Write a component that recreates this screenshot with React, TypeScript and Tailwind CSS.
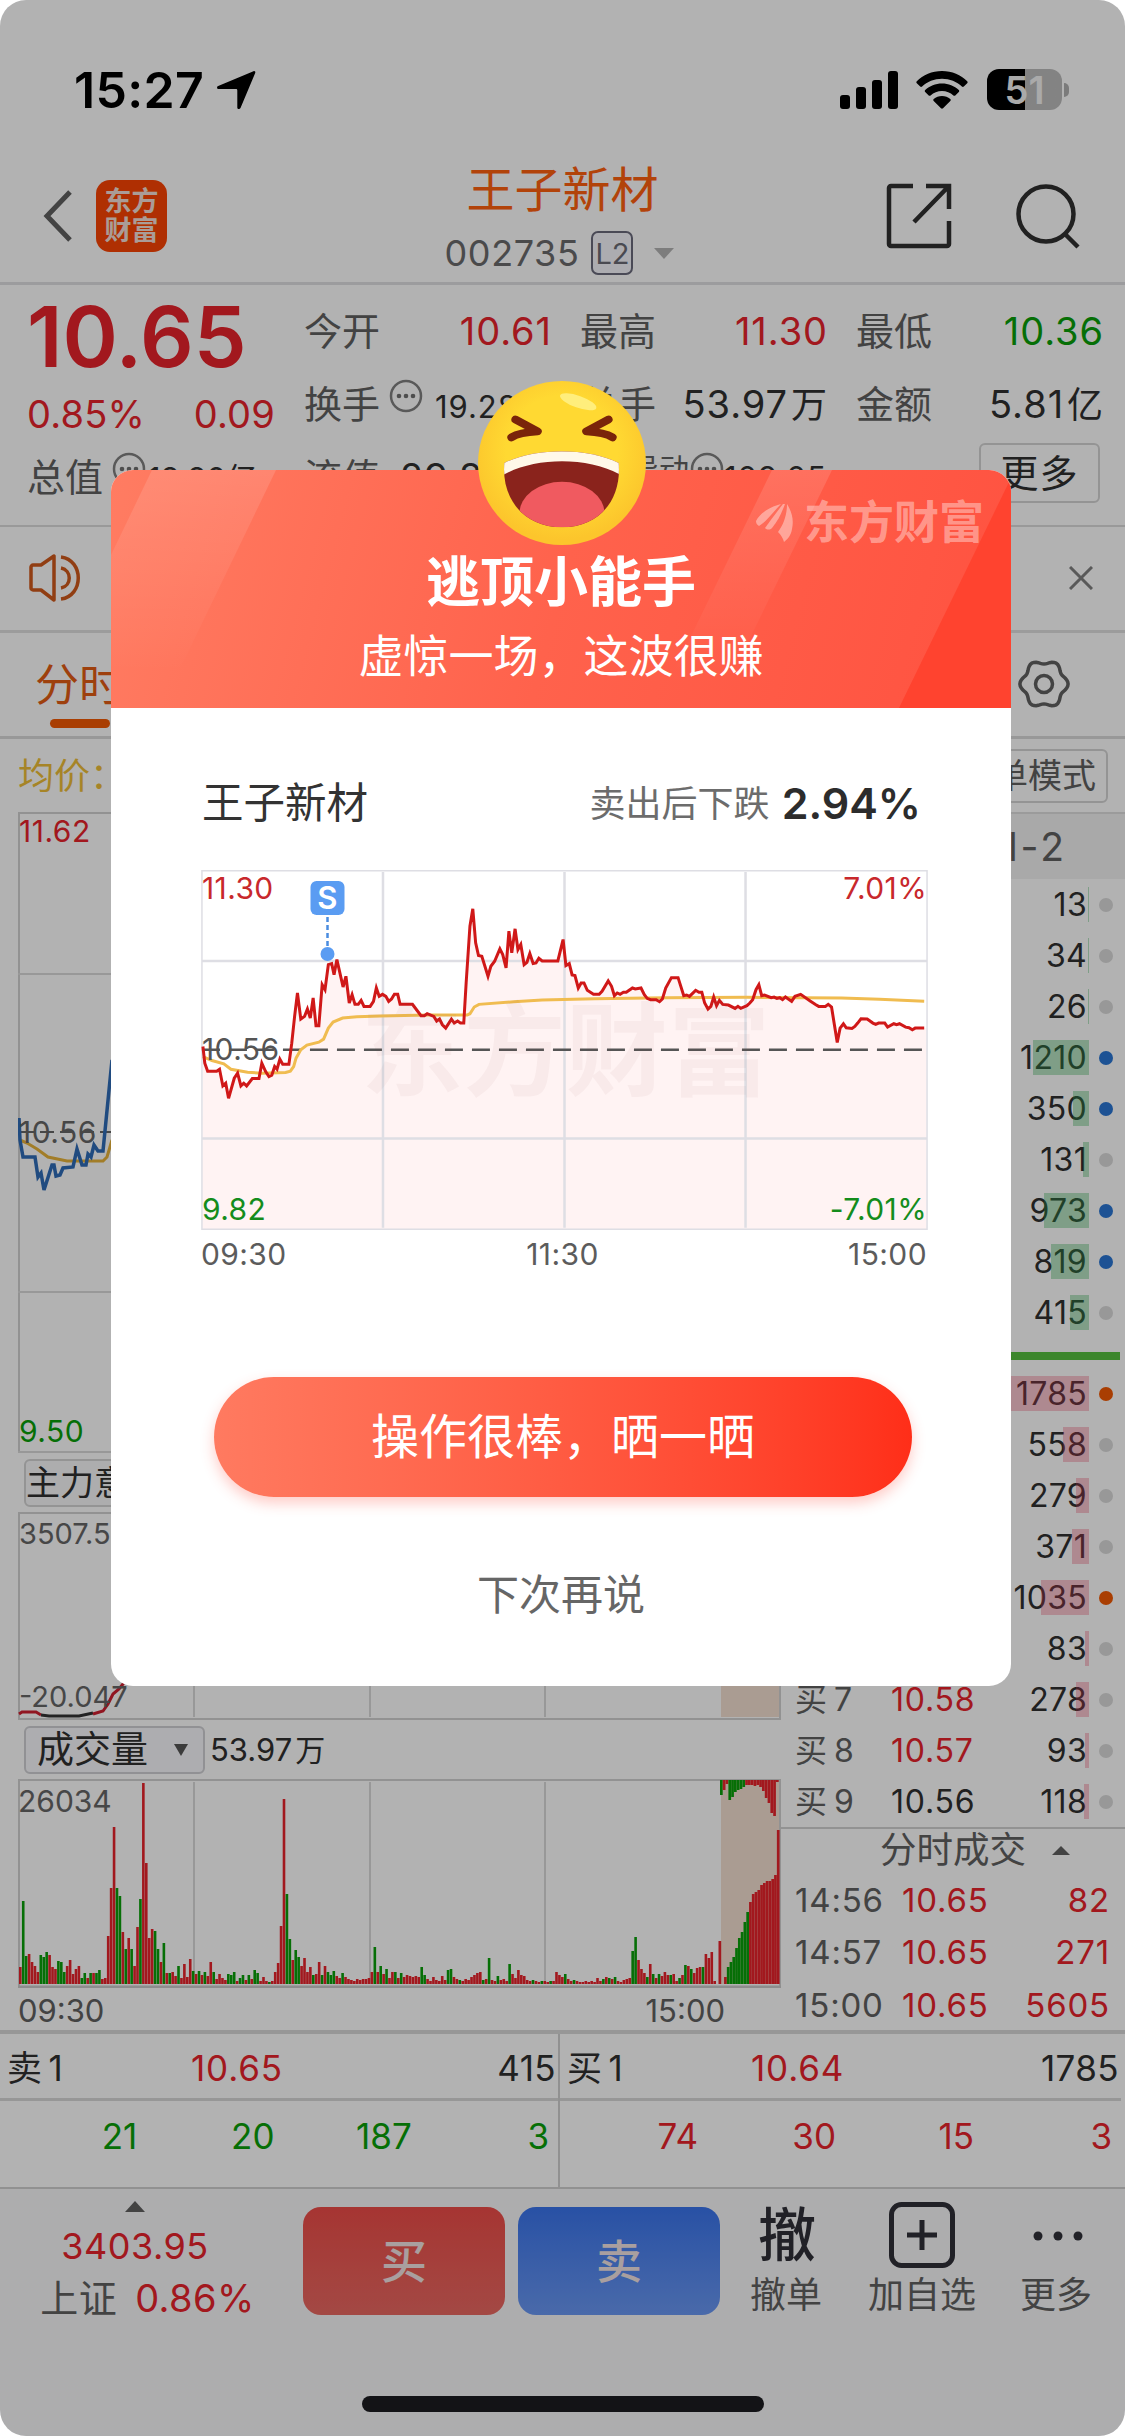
import type { ReactNode } from "react";

const RED = "text-[#e8232b]";
const GREEN = "text-[#0a9f0a]";

// one bar per minute, height in px, negative = falling minute (green)
const volumes = [
  17, -83, -28, 30, 22, 18, 12, -29, -27, -32, 29, 17, 15, -23, -22, -12, 18, 24, 10, 15, 18, -6, -11, 6, -11, 11, -11,
  -14, 5, 6, 48, 96, 157, -96, -88, 52, -35, 46, -35, 18, 57, -85, 201, 121, 46, 55, -53, -35, 22, -41, 11, -11, 12, 8,
  -18, 6, 20, 7, 25, -13, 10, -13, 9, -12, 8, 22, -12, 5, 10, 6, 4, -10, -9, -12, 3, -6, -9, 4, -9, 5, -14, -11, 3, 7, 3,
  -2, 3, 12, 21, 58, 185, -90, -45, 24, -34, -27, 18, 26, 12, 17, -9, 10, 22, -9, 18, -12, -9, -13, 8, 6, -11, 7, 5, 4, 3,
  5, 4, 5, 5, 6, 12, -37, 12, -18, 10, -15, 6, 12, -12, 6, -11, 7, 9, 8, 7, 8, 7, -17, -9, 5, 3, 7, 4, 3, 8, 4, -14, -15,
  7, 5, -4, 3, 5, 4, 7, 9, 11, 12, -4, 5, -26, 4, 3, -8, 4, 5, 3, -20, 10, 6, 14, 9, 8, 4, 3, -4, 3, 2, -3, 3, 2, -3, 3,
  12, 9, 7, -10, 5, 3, -4, 3, 2, 2, 3, 2, 3, 2, 6, 3, -5, 7, -6, 5, -7, 3, 2, 4, 5, 6, -33, -47, 24, 15, 11, -7, 20, -10,
  6, -10, 8, 12, 9, -9, 10, 3, -6, 9, -19, 18, -15, 11, 16, 17, -17, 30, 26, 32, 3,
];

const auction = [43, 0, 7, -17, -22, -27, -36, -46, -52, -62, -72, 82, 90, 92, 94, 99, 101, 103, 103, 105, 109, 154];
const auctionTop = [-15, 10, 4, -20, -17, -12, -10, -9, -7, 5, 5, 5, 6, 5, 7, 11, 18, 23, 33, 36, 2];

type Level = { name: string; price: string; qty: number; bar: number; dot?: boolean; flat?: boolean };

const sells: Level[] = [
  { name: "卖9", price: "10.73", qty: 13, bar: 1 },
  { name: "卖8", price: "10.72", qty: 34, bar: 1 },
  { name: "卖7", price: "10.71", qty: 26, bar: 1 },
  { name: "卖6", price: "10.70", qty: 1210, bar: 56, dot: true },
  { name: "卖5", price: "10.69", qty: 350, bar: 16, dot: true },
  { name: "卖4", price: "10.68", qty: 131, bar: 6 },
  { name: "卖3", price: "10.67", qty: 973, bar: 45, dot: true },
  { name: "卖2", price: "10.66", qty: 819, bar: 38, dot: true },
  { name: "卖1", price: "10.65", qty: 415, bar: 19 },
];

const buys: Level[] = [
  { name: "买1", price: "10.64", qty: 1785, bar: 82, dot: true },
  { name: "买2", price: "10.63", qty: 558, bar: 26 },
  { name: "买3", price: "10.62", qty: 279, bar: 13 },
  { name: "买4", price: "10.61", qty: 371, bar: 17 },
  { name: "买5", price: "10.60", qty: 1035, bar: 48, dot: true },
  { name: "买6", price: "10.59", qty: 83, bar: 4 },
  { name: "买7", price: "10.58", qty: 278, bar: 13 },
  { name: "买8", price: "10.57", qty: 93, bar: 4 },
  { name: "买9", price: "10.56", qty: 118, bar: 5, flat: true },
];

const trades = [
  ["14:56", "10.65", "82"],
  ["14:57", "10.65", "271"],
  ["15:00", "10.65", "5605"],
];

const priceLine =
  "26,590 30,640 36,664 55,664 61,658 68,708 74,700 80,745 92,685 99,670 106,708 112,700 118,708 130,686 144,686 150,640 158,665 165,680 171,676 177,650 182,658 188,628 194,643 207,643 213,580 219,500 225,430 232,508 240,500 246,478 252,505 258,445 264,528 270,528 277,405 283,420 290,345 297,342 302,375 308,330 321,412 327,380 334,460 340,435 346,464 353,464 359,452 365,470 378,470 385,455 391,415 397,440 404,434 411,440 417,455 423,448 429,434 436,434 441,464 467,464 485,498 492,498 498,492 512,500 518,514 524,508 530,525 537,535 549,508 555,520 562,514 568,520 575,520 580,400 588,230 594,178 600,280 606,318 613,320 626,380 632,350 640,335 651,298 657,315 664,355 670,245 676,310 683,238 689,300 695,285 702,345 708,338 714,312 721,342 727,340 733,326 740,334 773,334 784,270 790,348 797,342 803,376 809,378 816,415 822,400 828,400 835,422 848,434 860,434 866,425 879,394 886,410 892,438 898,430 904,434 911,428 917,428 930,415 936,418 948,415 955,435 961,446 968,450 980,450 987,456 993,448 1000,415 1012,384 1026,384 1038,438 1044,436 1050,440 1063,422 1070,428 1076,428 1082,460 1089,478 1095,470 1101,442 1107,468 1113,452 1120,464 1132,466 1146,476 1152,470 1158,476 1171,468 1177,460 1183,450 1190,420 1196,405 1202,438 1208,436 1222,444 1228,442 1234,446 1240,444 1246,450 1252,442 1265,455 1272,440 1284,434 1304,454 1316,465 1322,470 1336,470 1342,464 1349,472 1355,525 1361,578 1367,535 1374,522 1380,534 1392,536 1398,530 1404,520 1411,507 1424,508 1436,520 1442,524 1448,520 1461,520 1467,532 1480,522 1486,525 1492,522 1505,532 1512,534 1519,540 1525,535 1544,535";

const avgLine =
  "26,620 45,632 70,642 85,658 120,667 150,670 200,668 210,664 217,650 222,625 232,600 245,586 270,577 280,568 290,535 300,517 320,505 350,501 400,499 500,496 582,496 588,492 597,472 607,464 680,456 740,451 850,447 1000,444 1170,443 1370,445 1450,449 1544,455";

// outline of the six-lobed settings gear
const gear = Array.from({ length: 72 }, (_, i) => {
  const a = (i * Math.PI) / 36;
  const r = 22 + 2.1 * Math.cos(6 * a);
  return `${(26 + r * Math.cos(a)).toFixed(1)},${(26 + r * Math.sin(a)).toFixed(1)}`;
}).join(" ");

function StatusBar() {
  return (
    <div className="flex h-[153px] items-center pl-[74px] pr-[56px] pt-[26px]">
      <span className="text-[50px] font-semibold leading-none tracking-[0.3px] text-black">15:27</span>
      <svg className="ml-[12px]" width="40" height="40" viewBox="0 0 40 40">
        <path d="M37.5 1.2c1.2-.5 2.2.6 1.7 1.8L24.5 38c-.7 1.7-3.2 1.3-3.2-.6V20.5c0-.9-.5-1.4-1.4-1.4H2.8c-1.9 0-2.4-2.4-.6-3.2z" />
      </svg>
      <svg className="ml-auto" width="58" height="38" viewBox="0 0 58 38">
        <rect x="0" y="24" width="10" height="14" rx="3" />
        <rect x="16" y="16" width="10" height="22" rx="3" />
        <rect x="32" y="9" width="10" height="29" rx="3" />
        <rect x="48" y="0" width="10" height="38" rx="3" />
      </svg>
      <svg className="ml-[18px]" width="52" height="38" viewBox="0 0 52 38">
        <path d="M26 0C16 0 7 4 .8 10.300c-.6.6-.6 1.300 0 1.900l3.400 3.400c.5.5 1.300.5 1.900 0C11.200 10.600 18.200 7.800 26 7.800s14.800 2.800 19.900 7.800c.6.5 1.400.5 1.900 0l3.400-3.400c.6-.6.6-1.300 0-1.900C45 4 36 0 26 0z" />
        <path d="M26 12.500c-6.500 0-12.400 2.500-16.800 6.500-.6.6-.6 1.400 0 2l3.500 3.400c.5.500 1.300.5 1.900 0C17.600 21.700 21.600 20 26 20s8.400 1.700 11.400 4.400c.6.5 1.400.5 1.900 0l3.500-3.400c.6-.6.6-1.400 0-2-4.400-4-10.300-6.500-16.800-6.500z" />
        <path d="M26 25c-3.200 0-6 1.100-8.300 3-.6.5-.6 1.400 0 2l7.300 7.200c.6.600 1.400.6 2 0l7.300-7.200c.6-.6.600-1.500 0-2-2.300-1.900-5.100-3-8.300-3z" />
      </svg>
      <div className="ml-[19px] flex h-[41px] w-[75px] items-center justify-center rounded-[12px] bg-linear-to-r from-black from-51% to-[#bcbcbc] to-51%">
        <span className="text-[38px] font-semibold leading-none text-[#f4f4f4]">51</span>
      </div>
      <div className="ml-[2px] h-[14px] w-[5px] rounded-r-full bg-[#b0b0b0]" />
    </div>
  );
}

function NavBar() {
  return (
    <div className="grid h-[132px] grid-cols-[1fr_auto_1fr] border-b-3 border-[#e0e0e2]">
      <div className="flex items-center pl-[43px] pb-[4px]">
        <svg width="30" height="54" viewBox="0 0 30 54" fill="none" stroke="#606060" strokeWidth="5">
          <path d="M27 3 4 27l23 24" />
        </svg>
        <div className="ml-[23px] flex h-[72px] w-[71px] flex-col items-center justify-center rounded-[14px] bg-[#fb4404] text-[27px] font-bold leading-[29px] text-[#f4e0d8]">
          <span>东方</span>
          <span>财富</span>
        </div>
      </div>
      <div className="flex flex-col items-center pt-[11px]">
        <div className="text-[48px] leading-[52px] text-[#ff600f]">王子新材</div>
        <div className="mt-[15px] flex items-center pr-[6px]">
          <span className="text-[36px] leading-none tracking-[0.6px] text-[#6a6a6c]">002735</span>
          <span className="ml-[12px] flex h-[44px] w-[42px] items-center justify-center rounded-[7px] border-2 border-[#6a6a7c] bg-[#f7f7fc] text-[29px] leading-none text-[#6a6a74]">
            L2
          </span>
          <svg className="ml-[21px]" width="20" height="11" viewBox="0 0 20 11" fill="#b4b4b4">
            <path d="M0 0h20L10 11z" />
          </svg>
        </div>
      </div>
      <div className="flex items-center justify-end gap-[63px] pb-[4px] pr-[44px]">
        <svg width="66" height="66" viewBox="0 0 66 66" fill="none" stroke="#303030" strokeWidth="4.500">
          <path d="M27 3H5a2 2 0 0 0-2 2v56a2 2 0 0 0 2 2h56a2 2 0 0 0 2-2V38" />
          <path d="M40 3h23v23M62 4 28 39" />
        </svg>
        <svg width="66" height="66" viewBox="0 0 66 66" fill="none" stroke="#303030" strokeWidth="4.500">
          <circle cx="31" cy="31" r="27.500" />
          <path d="m50 51 13 13" />
        </svg>
      </div>
    </div>
  );
}

function Dots() {
  return (
    <svg className="mb-[16px] ml-[9px]" width="34" height="34" viewBox="0 0 34 34" fill="none" stroke="#808080" strokeWidth="2.500">
      <circle cx="17" cy="17" r="15" />
      <g fill="#707070" stroke="none">
        <circle cx="10" cy="17" r="2.300" />
        <circle cx="17" cy="17" r="2.300" />
        <circle cx="24" cy="17" r="2.300" />
      </g>
    </svg>
  );
}

function Stat({ label, children }: { label: ReactNode; children: ReactNode }) {
  return (
    <div className="flex h-[73px] items-center">
      <span className="flex items-center text-[38px] tracking-normal text-[#606060]">{label}</span>
      {children}
    </div>
  );
}

function Quote() {
  return (
    <div className="flex h-[242px] gap-[29px] overflow-hidden border-b-2 border-[#dcdcdc] pl-[27px] leading-none">
      <div className={`w-[248px] ${RED}`}>
        <div className="flex h-[103px] items-center text-[84px] font-semibold">10.65</div>
        <div className="flex h-[52px] items-center justify-between text-[38px] tracking-[0.2px]">
          <span>0.85%</span>
          <span>0.09</span>
        </div>
        <Stat label={<>总值<Dots /></>}>
          <span className="ml-[2px] whitespace-nowrap pt-[3px] text-[31px] text-[#303030]">18.80亿</span>
        </Stat>
      </div>
      <div className="grid grid-cols-[248px_248px_248px] content-start gap-x-[28px] pt-[9px] text-[38px] tracking-wide text-[#303030]">
        <Stat label="今开"><span className={`ml-auto ${RED}`}>10.61</span></Stat>
        <Stat label="最高"><span className={`ml-auto ${RED}`}>11.30</span></Stat>
        <Stat label="最低"><span className={`ml-auto ${GREEN}`}>10.36</span></Stat>
        <Stat label={<>换手<Dots /></>}><span className="ml-[12px] pt-[6px] text-[31px]">19.28%</span></Stat>
        <Stat label="总手"><span className="ml-auto">53.97<span className="ml-[3px] text-[36px]">万</span></span></Stat>
        <Stat label="金额"><span className="ml-auto">5.81<span className="ml-[3px] text-[36px]">亿</span></span></Stat>
        <Stat label="流值"><span className="ml-[20px]">29.89亿</span></Stat>
        <Stat label={<span className="flex items-center pl-[49px] text-[30px]"><span className="pb-[16px]">异动</span><span className="-ml-[8px]"><Dots /></span></span>}>
          <span className="pt-[2px] text-[31px]">109.05</span>
        </Stat>
        <div className="ml-auto mr-[4px] mt-[3px] flex h-[60px] w-[121px] items-center justify-center rounded-[6px] border-2 border-[#d4d4d4]">更多</div>
      </div>
    </div>
  );
}

function NewsAndTabs() {
  return (
    <>
      <div className="flex h-[106px] items-center justify-between border-b-3 border-[#e0e0e0] pb-[2px] pl-[28px] pr-[32px]">
        <svg width="54" height="50" viewBox="0 0 54 50" fill="none" stroke="#d05a1c" strokeWidth="3.500" strokeLinejoin="round">
          <path d="M3 14c0-1 1-2 2-2h8L26 3v44L13 37H5c-1 0-2-1-2-2z" />
          <path d="M33 15c11 2 11 18 0 20M33 4c23 3 23 39 0 42" />
        </svg>
        <svg width="24" height="24" viewBox="0 0 24 24" stroke="#808080" strokeWidth="3">
          <path d="M1 1l22 22M23 1 1 23" />
        </svg>
      </div>
      <div className="flex h-[106px] justify-between border-b-3 border-[#dadada] pl-[35px] pr-[55px]">
        <div className="flex flex-col items-center pt-[28px]">
          <span className="text-[44px] leading-[48px] text-[#e25c14]">分时</span>
          <span className="ml-[1px] mt-[10px] h-[9px] w-[60px] rounded-full bg-[#f25a04]" />
        </div>
        <svg className="mt-[25px]" width="52" height="52" viewBox="0 0 52 52" fill="none" stroke="#606060" strokeWidth="3.500">
          <polygon points={gear} />
          <circle cx="26" cy="26" r="8.500" />
        </svg>
      </div>
    </>
  );
}

function IntradayChart() {
  return (
    <svg className="ml-[18px] block" width="762" height="641" viewBox="18 812 762 641" fill="none">
      <path d="M19 1452V813h760" stroke="#d2d2d2" strokeWidth="2" />
      <path d="M18 974h762M18 1292h762M18 1452h762" stroke="#dadada" strokeWidth="2" />
      <path d="M20 1132h91" stroke="#666" strokeWidth="2" strokeDasharray="14 6" />
      <polyline points="20,1140 27,1143 37,1149 48,1157 67,1161 103,1161 107,1157 112,1140" stroke="#e8b43a" strokeWidth="3" />
      <polyline
        points="19,1118 20,1140 23,1157 35,1157 38,1177 41,1173 44,1190 52,1165 54,1165 56,1176 60,1175 63,1168 73,1167 77,1149 82,1165 86,1165 88,1154 91,1157 94,1145 98,1151 103,1151 112,1060"
        stroke="#2f6cb8"
        strokeWidth="3.500"
      />
      <g className="text-[30px] tracking-[0.5px]">
        <text x="19" y="842" fill="#e8232b">11.62</text>
        <text x="19" y="1143" fill="#666">10.56</text>
        <text x="19" y="1442" fill="#0a9f0a">9.50</text>
      </g>
    </svg>
  );
}

function ForceChart() {
  return (
    <svg className="ml-[18px] block" width="763" height="208" viewBox="18 1512 763 208" fill="none">
      <rect x="721" y="1512" width="59" height="205" fill="#f4e0d2" />
      <path d="M19 1720V1513h761v207" stroke="#d2d2d2" strokeWidth="2" />
      <path d="M194 1514v203M370 1514v203M545 1514v203" stroke="#dadada" strokeWidth="2" />
      <path d="M18 1719h763" stroke="#d2d2d2" strokeWidth="2" />
      <path d="m19 1714 3-2h14l5 3" stroke="#d02030" strokeWidth="3" />
      <path d="m41 1715 8 1h30l14-3" stroke="#333" strokeWidth="3" />
      <path d="m93 1714 10-3 5-7 5-10 6-5 8-10" stroke="#d02030" strokeWidth="3" />
      <g className="text-[29px]" fill="#666">
        <text x="19" y="1544">3507.53</text>
        <text x="19" y="1707">-20.047</text>
      </g>
    </svg>
  );
}

function VolumeChart() {
  return (
    <svg className="ml-[18px] block" width="763" height="209" viewBox="18 1779 763 209">
      <rect x="721" y="1780" width="58" height="204" fill="#f4e0d2" />
      <path d="M19 1988V1780h761v208" stroke="#d2d2d2" strokeWidth="2" fill="none" />
      <path d="M194 1782v202M370 1782v202M545 1782v202" stroke="#dadada" strokeWidth="2" />
      <path d="M18 1987h763" stroke="#cacaca" strokeWidth="3" />
      <text x="18" y="1812" fill="#666" className="text-[30px]">26034</text>
      {volumes.map((v, i) => (
        <rect key={i} x={19 + i * 2.93} y={1984 - Math.abs(v)} width="2.600" height={Math.abs(v)} fill={v > 0 ? "#e8232b" : "#0a9f0a"} />
      ))}
      {auction.map((v, i) => (
        <rect key={i} x={718.5 + i * 2.78} y={1984 - Math.abs(v)} width="2.700" height={Math.abs(v)} fill={v > 0 ? "#e8232b" : "#0a9f0a"} />
      ))}
      {auctionTop.map((v, i) => (
        <rect key={i} x={720 + i * 2.8} y="1780" width="2.700" height={Math.abs(v)} fill={v > 0 ? "#e8232b" : "#0a9f0a"} />
      ))}
    </svg>
  );
}

function LevelRow({ level, side }: { level: Level; side: "sell" | "buy" }) {
  const active = side === "sell" ? "bg-[#2a76d4]" : "bg-[#f25a04]";
  return (
    <div className="flex h-[51px] items-center pl-[15px] pr-[12px] text-[32px]">
      <span className="w-[96px] text-[#606060]">{level.name[0]}<span className="ml-[7px]">{level.name[1]}</span></span>
      <span className={`tracking-wide ${level.flat ? "text-[#303030]" : RED}`}>{level.price}</span>
      <span className="relative ml-auto flex h-[35px] items-center pr-[2px] tracking-[0.3px] text-[#303030]">
        {level.qty}
        <span
          className={`absolute right-0 top-0 h-full ${side === "sell" ? "bg-[#30b050]/35" : "bg-[#f04060]/30"}`}
          style={{ width: level.bar }}
        />
      </span>
      <span className={`ml-[10px] h-[14px] w-[14px] rounded-full ${level.dot ? active : "bg-[#dadada]"}`} />
    </div>
  );
}

function OrderBook() {
  return (
    <div className="w-[345px]">
      <div className="flex h-[73px] items-center justify-end pr-[17px]">
        <span className="rounded-[6px] border-2 border-[#d4d4d4] py-[8px] pl-[12px] pr-[10px] text-[34px] leading-[34px] text-[#606060]">简单模式</span>
      </div>
      <div className="flex h-[67px] items-center justify-end border-t-2 border-[#dedede] bg-[#f2f2f3] pr-[58px] text-[39px] tracking-[3px] text-[#606060]">
        Level-2
      </div>
      {sells.map((l) => <LevelRow key={l.name} level={l} side="sell" />)}
      <div className="flex h-[30px] items-center pl-[14px] pr-[5px] pt-[5px]">
        <div className="h-[8px] w-full bg-[#56c040]" />
      </div>
      {buys.map((l) => <LevelRow key={l.name} level={l} side="buy" />)}
      <div className="flex h-[47px] items-center border-t-2 border-[#d2d2d2] pb-[3px] pl-[100px] text-[36.5px] text-[#606060]">
        分时成交
        <svg className="ml-[26px]" width="18" height="9" viewBox="0 0 18 9" fill="#606060">
          <path d="M0 9h18L9 0z" />
        </svg>
      </div>
      {trades.map(([time, price, qty]) => (
        <div key={time} className={`flex h-[52.5px] items-center pl-[15px] pr-[15px] text-[33px] tracking-wide ${RED}`}>
          <span className="w-[107px] text-[#606060]">{time}</span>
          <span>{price}</span>
          <span className="ml-auto">{qty}</span>
        </div>
      ))}
    </div>
  );
}

function MarketPanel() {
  return (
    <div className="flex h-[1295px] overflow-hidden border-b-4 border-[#d8d8d8] leading-none">
      <div className="w-[780px]">
        <div className="flex h-[73px] items-center pl-[18px] text-[36px] text-[#eebe38]">均价：</div>
        <IntradayChart />
        <div className="flex h-[59px] items-center pl-[24px]">
          <span className="flex h-[48px] w-[180px] items-center rounded-[6px] border-2 border-[#d4d4d4] bg-[#f8f8fa] text-[34px] text-[#303030]">主力意愿</span>
        </div>
        <ForceChart />
        <div className="flex h-[59px] items-center pl-[24px] text-[#303030]">
          <span className="flex h-[48px] w-[181px] items-center justify-between rounded-[6px] border-2 border-[#d0d0d4] bg-[#f8f8fc] pl-[11px] pr-[15px] text-[37px]">
            成交量
            <svg width="14" height="12" viewBox="0 0 14 12" fill="#555">
              <path d="M0 0h14L7 12z" />
            </svg>
          </span>
          <span className="ml-[5px] text-[31px]">53.97<span className="ml-[3px] text-[30px]">万</span></span>
        </div>
        <VolumeChart />
        <div className="flex h-[45px] items-center justify-between pl-[18px] pr-[55px] text-[31px] text-[#606060]">
          <span>09:30</span>
          <span>15:00</span>
        </div>
      </div>
      <OrderBook />
    </div>
  );
}

function BestLevel({ name, price, qty, parts, color }: { name: string; price: string; qty: string; parts: number[]; color: string }) {
  return (
    <div className="border-r-2 border-[#d0d0d0] last:border-r-0 last:pr-[4px]">
      <div className="grid h-[67px] grid-cols-[184px_1fr_auto] items-center border-b-3 border-[#d8d8d8] pl-[7px] pr-[2px] pt-[5px] text-[35px] tracking-[0.4px] text-[#303030]">
        <span>{name}<span className="ml-[6px]">1</span></span>
        <span className={`tracking-wide ${RED}`}>{price}</span>
        <span>{qty}</span>
      </div>
      <div className={`grid h-[86px] grid-cols-4 pr-[9px] pt-[18px] text-right text-[35px] ${color}`}>
        {parts.map((p, i) => <span key={i}>{p}</span>)}
      </div>
    </div>
  );
}

function BottomBar() {
  return (
    <div className="flex flex-1 flex-col bg-[#f8f8fa] leading-none">
      <div className="flex h-[200px] pt-[12px]">
        <div className={`flex w-[303px] flex-col items-center pr-[33px] ${RED}`}>
          <svg width="20" height="11" viewBox="0 0 20 11" fill="#606060">
            <path d="M0 11h20L10 0z" />
          </svg>
          <span className="mt-[16px] text-[36px] tracking-[0.5px]">3403.95</span>
          <span className="mt-[15px] pl-[25px] text-[38px] tracking-[0.4px]"><span className="mr-[18px] text-[#606060]">上证</span>0.86%</span>
        </div>
        <div className="mt-[6px] flex h-[108px] gap-[13px] text-[46px] font-medium text-[#f2e4e4]">
          <span className="flex w-[202px] items-center justify-center rounded-[18px] bg-linear-to-b from-[#ee4c48] to-[#ea6862]">买</span>
          <span className="flex w-[202px] items-center justify-center rounded-[18px] bg-linear-to-b from-[#3a74ec] to-[#6a98f4]">卖</span>
        </div>
        <div className="ml-[29px] flex w-[74px] flex-col items-center text-[36px] text-[#606060]">
          <span className="mt-[5px] pl-[2px] text-[58px] font-medium text-[#303038]">撤</span>
          <span className="mt-[13px]">撤单</span>
        </div>
        <div className="ml-[43px] flex w-[112px] flex-col items-center text-[36px] text-[#606060]">
          <svg className="mt-[1px]" width="66" height="66" viewBox="0 0 66 66" fill="none" stroke="#303038" strokeWidth="5">
            <rect x="2.500" y="2.500" width="61" height="61" rx="10" />
            <path d="M33 18v30M18 33h30" />
          </svg>
          <span className="mt-[9px]">加自选</span>
        </div>
        <div className="ml-[36px] flex w-[84px] flex-col items-center text-[36px] text-[#606060]">
          <svg className="ml-[4px] mt-[1px]" width="50" height="66" viewBox="0 0 50 66" fill="#303038">
            <circle cx="5" cy="34" r="4.500" />
            <circle cx="25" cy="34" r="4.500" />
            <circle cx="45" cy="34" r="4.500" />
          </svg>
          <span className="mt-[9px]">更多</span>
        </div>
      </div>
      <div className="mx-auto mt-[7px] h-[16px] w-[402px] rounded-full bg-[#1c1c20]" />
    </div>
  );
}

function LaughFace() {
  return (
    <svg className="absolute left-[365px] top-[-91px]" width="172" height="168" viewBox="0 0 170 170" preserveAspectRatio="none">
      <defs>
        <radialGradient id="face" cx="50%" cy="42%" r="55%">
          <stop offset="0.600" stopColor="#ffd932" />
          <stop offset="1" stopColor="#fcc52c" />
        </radialGradient>
        <clipPath id="mouth">
          <path d="M28 85c30-16 83-16 113 0 3 36-18 65-56 65S25 121 28 85z" />
        </clipPath>
      </defs>
      <circle cx="85" cy="85" r="83" fill="url(#face)" />
      <ellipse cx="101" cy="23" rx="19" ry="6" fill="#ffee7c" transform="rotate(20 101 23)" />
      <g clipPath="url(#mouth)">
        <rect width="170" height="170" fill="#8a231c" />
        <path d="M24 99c32-21 90-21 122 0V60H24z" fill="#fff8e8" />
        <ellipse cx="85" cy="136" rx="42" ry="32" fill="#f05a60" />
      </g>
      <g fill="none" stroke="#7a240a" strokeWidth="8" strokeLinecap="round" strokeLinejoin="round">
        <path d="m39 41 22 12q-18 1-26 6" />
        <path d="m131 41-22 12q18 1 26 6" />
      </g>
    </svg>
  );
}

function ModalHeader() {
  return (
    <div className="relative h-[238px] overflow-hidden rounded-t-[22px] bg-linear-[105deg] from-[#ff7c62] via-[#ff624c] to-[#ff5240] text-center text-white">
      <svg className="absolute inset-0" width="900" height="238" viewBox="0 0 900 238">
        <defs>
          <linearGradient id="shine" x1="0" y1="0" x2="0" y2="1">
            <stop offset="0" stopColor="#fff" stopOpacity="0.130" />
            <stop offset="0.850" stopColor="#fff" stopOpacity="0" />
          </linearGradient>
        </defs>
        <path d="M41 0h124L50 238H0V85z" fill="url(#shine)" />
        <path d="M661 0h60L605 238h-60z" fill="url(#shine)" />
        <path d="M900 8v230H788z" fill="#ff432f" />
      </svg>
      <div className="absolute left-[645px] top-[33px] flex items-center text-white/40">
        <svg width="38" height="40" viewBox="0 0 38 40" fill="currentColor">
          <path d="M0 18C5 9 14 4 25 1 17 9 10 19 3 23 1 22 0 20 0 18z" />
          <path d="M27 1C20 10 14 18 9 25c2 2 5 2 7 0C22 18 26 9 29 1z" />
          <path d="M31 1c5 8 7 16 5 25-1 6-4 10-8 13-1-4-3-7-6-10C28 21 31 11 31 1z" />
        </svg>
        <span className="ml-[10px] text-[45px] font-bold leading-[40px]">东方财富</span>
      </div>
      <div className="relative pt-[85px] text-[54px] font-bold leading-[56px]">逃顶小能手</div>
      <div className="relative mt-[18px] text-[45px] leading-[56px]">虚惊一场，这波很赚</div>
    </div>
  );
}

function TradeChart() {
  return (
    <div className="relative mx-[90px] mt-[33px] h-[361px] w-[727px] text-[30px] leading-none tracking-[0.4px]">
      <svg className="absolute inset-0" width="727" height="361" viewBox="22 62 1530 1080" preserveAspectRatio="none" fill="none">
        <polygon points={`24,1137 ${priceLine} 1549,535 1549,1137`} fill="#fff3f3" />
        <g stroke="#dedee4" strokeWidth="2.500">
          <path vectorEffect="non-scaling-stroke" d="M405 68v1064M787 68v1064M1168 68v1064M24 334h1526M24 865h1526" />
          <path vectorEffect="non-scaling-stroke" strokeWidth="1.500" d="M24 64h1526v1073H24z" />
        </g>
        <path vectorEffect="non-scaling-stroke" d="M24 600h1526" stroke="#555" strokeWidth="2.500" strokeDasharray="18 9" />
        <polyline vectorEffect="non-scaling-stroke" points={avgLine} stroke="#f0bc50" strokeWidth="3" />
        <polyline vectorEffect="non-scaling-stroke" points={priceLine} stroke="#d01818" strokeWidth="3" />
      </svg>
      <span className="absolute left-[160px] top-[130px] text-[102px] font-bold text-[#8a5050]/5">东方财富</span>
      <svg className="absolute left-[109px] top-[11px]" width="35" height="82" viewBox="0 0 35 82">
        <rect x="0.500" y="0" width="34" height="34" rx="6" fill="#5a9cf2" />
        <path d="M17.500 36v30" stroke="#4a8ce0" strokeWidth="2.500" strokeDasharray="5 3" />
        <circle cx="17.500" cy="73" r="7" fill="#5a9cf2" />
        <text x="17.500" y="28" textAnchor="middle" fill="#fff" className="text-[31px] font-semibold">S</text>
      </svg>
      <span className="absolute left-[1px] top-[3px] text-[#c8282c]">11.30</span>
      <span className="absolute right-[1px] top-[3px] text-[#c8282c]">7.01%</span>
      <span className="absolute left-[1px] top-[164px] text-[#555]">10.56</span>
      <span className="absolute bottom-[7px] left-[1px] text-[#148c1c]">9.82</span>
      <span className="absolute bottom-[7px] right-[1px] text-[#148c1c]">-7.01%</span>
    </div>
  );
}

function SellModal() {
  return (
    <div className="absolute left-[111px] top-[470px] h-[1216px] w-[900px] rounded-[22px] bg-white">
      <ModalHeader />
      <LaughFace />
      <div className="flex h-[129px] items-end justify-between pl-[91px] pr-[90px] leading-none">
        <span className="pb-[13px] text-[41.5px] text-[#333]">王子新材</span>
        <span className="flex items-center pb-[12px] text-[36px] text-[#6c6c6c]">
          卖出后下跌
          <span className="ml-[12px] text-[43px] font-semibold text-[#2c2c2c]">2.94%</span>
        </span>
      </div>
      <TradeChart />
      <div className="ml-[90px] mr-[84px] mt-[8px] grid grid-cols-3 text-[30px] leading-none tracking-[0.4px] text-[#5c5c5c]">
        <span>09:30</span>
        <span className="pr-[3px] text-center">11:30</span>
        <span className="text-right">15:00</span>
      </div>
      <button className="ml-[103px] mt-[108px] flex h-[120px] w-[698px] items-center justify-center rounded-full bg-linear-to-r from-[#ff7a60] to-[#ff2e18] text-[48px] text-white shadow-[0_6px_14px_rgba(255,70,50,0.28)]">
        操作很棒，晒一晒
      </button>
      <div className="mt-[77px] text-center text-[42px] leading-none text-[#666]">下次再说</div>
    </div>
  );
}

export default function App() {
  return (
    <div className="h-[2436px] w-[1125px] bg-white font-['Inter','Noto_Sans_CJK_SC',sans-serif]">
      <div className="relative flex h-full flex-col overflow-hidden rounded-[26px] bg-white">
        <StatusBar />
        <NavBar />
        <Quote />
        <NewsAndTabs />
        <MarketPanel />
        <div className="grid h-[155px] grid-cols-[560px_565px] border-b-2 border-[#d0d0d0] leading-none">
          <BestLevel name="卖" price="10.65" qty="415" parts={[21, 20, 187, 3]} color={GREEN} />
          <BestLevel name="买" price="10.64" qty="1785" parts={[74, 30, 15, 3]} color={RED} />
        </div>
        <BottomBar />
        <div className="absolute inset-0 bg-black/30" />
        <SellModal />
      </div>
    </div>
  );
}
